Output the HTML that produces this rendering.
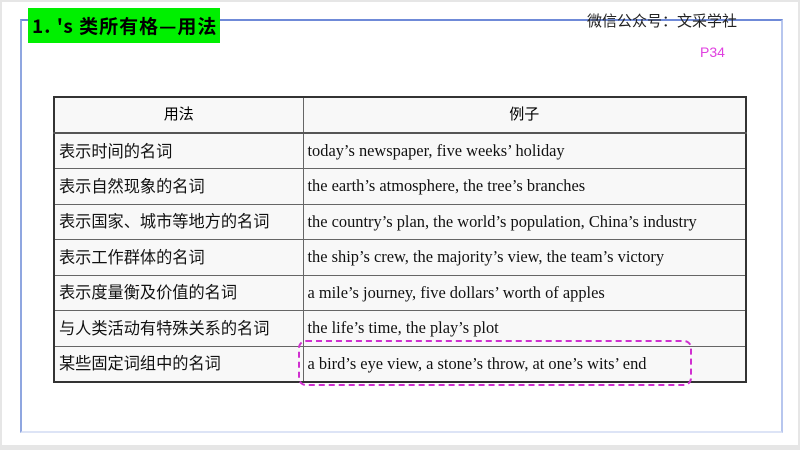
<!DOCTYPE html>
<html><head><meta charset="utf-8"><style>
*{margin:0;padding:0;box-sizing:border-box}
body{width:800px;height:450px;background:#e6e6e6;position:relative;overflow:hidden;font-family:"Liberation Serif","Noto Serif CJK SC",serif}
.page{position:absolute;left:2px;top:2px;width:796px;height:443px;background:#fff}
.frame{position:absolute;left:20px;top:19px;width:763px;height:414px;border:2px solid #8fa6e0;border-top-color:#6f8ad8;border-right-color:#b7c6ee;border-bottom-color:#dde4f6}
.green{position:absolute;left:28px;top:8px;width:192px;height:35px;background:#00f000;font:bold 19px "Noto Sans CJK SC",sans-serif;color:#000;line-height:35px;padding-left:4px;letter-spacing:1px}
.wx{position:absolute;left:587px;top:11px;font:15px/20px "Noto Sans CJK SC",sans-serif;color:#222}
.p34{position:absolute;left:700px;top:44px;font:14px "Liberation Sans",sans-serif;color:#e040e0}
table{position:absolute;left:53px;top:96px;width:694px;border-collapse:collapse;border:2px solid #333;background:#f8f8f8}
td{border:1px solid #666;height:35.5px;font-size:16.4px;line-height:18px;color:#111;padding-left:4px;font-family:"Liberation Serif","Noto Sans CJK SC",serif;vertical-align:middle}
td.c{font-family:"Noto Sans CJK SC",sans-serif;font-size:16.2px;line-height:16px;padding-bottom:3px}
th{border:1px solid #666;height:36px;font:15px/16px "Noto Sans CJK SC",sans-serif;font-weight:normal;border-bottom:2px solid #555;padding-bottom:3px}
.dash{position:absolute;left:298px;top:340px;width:394px;height:46px;border:2.5px dashed #d030d0;border-radius:8px}
</style></head><body>
<div class="page"></div>
<div class="frame"></div>
<div class="green">1. 's 类所有格—用法</div>
<div class="wx">微信公众号：文采学社</div>
<div class="p34">P34</div>
<table>
<tr><th style="width:249px">用法</th><th>例子</th></tr>
<tr><td class="c">表示时间的名词</td><td>today’s newspaper, five weeks’ holiday</td></tr>
<tr><td class="c">表示自然现象的名词</td><td>the earth’s atmosphere, the tree’s branches</td></tr>
<tr><td class="c">表示国家、城市等地方的名词</td><td>the country’s plan, the world’s population, China’s industry</td></tr>
<tr><td class="c">表示工作群体的名词</td><td>the ship’s crew, the majority’s view, the team’s victory</td></tr>
<tr><td class="c">表示度量衡及价值的名词</td><td>a mile’s journey, five dollars’ worth of apples</td></tr>
<tr><td class="c">与人类活动有特殊关系的名词</td><td>the life’s time, the play’s plot</td></tr>
<tr><td class="c">某些固定词组中的名词</td><td>a bird’s eye view, a stone’s throw, at one’s wits’ end</td></tr>
</table>
<div class="dash"></div>
</body></html>
